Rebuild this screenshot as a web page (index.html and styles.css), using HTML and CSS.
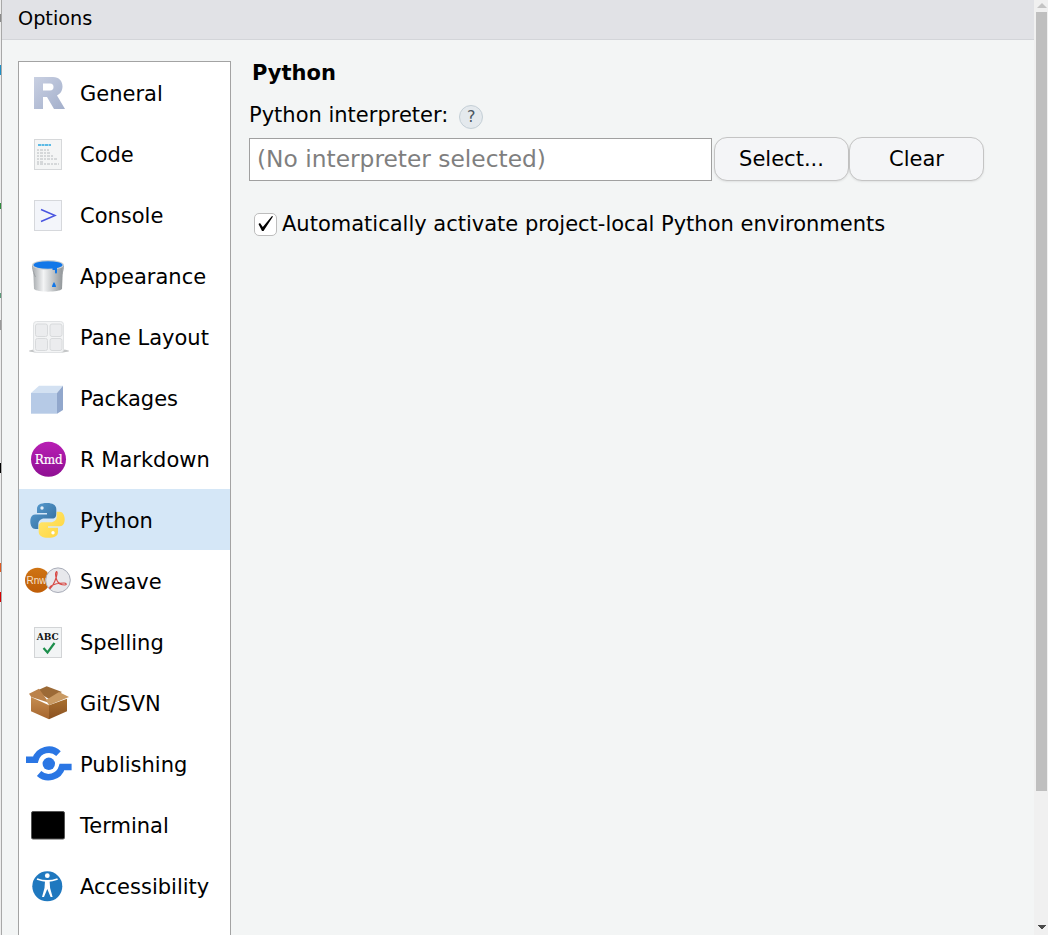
FILE: index.html
```html
<!DOCTYPE html>
<html lang="en">
<head>
<meta charset="utf-8">
<title>Options</title>
<link rel="stylesheet" href="styles.css">
</head>
<body>
<div class="backdrop">
  <i class="mark m0"></i><i class="mark m1"></i><i class="mark m2"></i><i class="mark m3"></i><i class="mark m7"></i><i class="mark m4"></i><i class="mark m5"></i><i class="mark m6"></i>
</div>
<div class="dialog">
  <header class="titlebar">Options</header>
  <div class="dialog-body">
    <nav class="sidebar">
      <div class="nav-item">
        <svg class="icon" width="50" height="40" viewBox="0 0 50 40"><defs><linearGradient id="rg" x1="0" y1="0" x2="1" y2="1"><stop offset="0" stop-color="#c9d0e2"/><stop offset="1" stop-color="#a3afcb"/></linearGradient></defs><path fill="url(#rg)" fill-rule="evenodd" d="M12 4h19c6 0 9.500 4 9.500 9.500 0 4.500-2.500 7.500-5.500 9l8 13.500H32l-7-12h-4v12h-9zM21 10.500v7h7c2.500 0 3.500-1.500 3.500-3.500s-1-3.500-3.500-3.500z"/></svg>
        <span class="nav-label">General</span>
      </div>
      <div class="nav-item">
        <svg class="icon" width="50" height="40" viewBox="0 0 50 40"><rect x="12.500" y="5.500" width="27" height="30" fill="#f4f5f5" stroke="#d6d8da"/><path stroke="#2aa7df" stroke-width="1.500" stroke-dasharray="3 .5" d="M16 11h13"/><path stroke="#a8acb0" stroke-width=".8" stroke-dasharray="2 1 3 1" d="M15 16h12M15 19h14M15 22h16M15 25h20M15 28h6M15 30h22"/></svg>
        <span class="nav-label">Code</span>
      </div>
      <div class="nav-item">
        <svg class="icon" width="50" height="40" viewBox="0 0 50 40"><rect x="12.500" y="5.500" width="27" height="30" fill="#f3f5fa" stroke="#d6d8dc"/><path fill="none" stroke="#4a55e0" stroke-width="1.500" d="M19 14.500l14 6-14 6"/></svg>
        <span class="nav-label">Console</span>
      </div>
      <div class="nav-item">
        <svg class="icon" width="50" height="40" viewBox="0 0 50 40"><defs><linearGradient id="bk" x1="0" x2="1"><stop offset="0" stop-color="#a9adb0"/><stop offset=".35" stop-color="#f3f4f5"/><stop offset="1" stop-color="#8f9497"/></linearGradient></defs><path fill="url(#bk)" d="M11 9h30l-1 24c-3 3.500-25 3.500-28 0z"/><path fill="none" stroke="#9a9ea2" d="M10.500 9c0 6 2 10 3 12M41.500 9c0 6-2 10-3 12"/><ellipse cx="26" cy="9" rx="16" ry="5" fill="#ced1d3"/><ellipse cx="26" cy="9" rx="14.500" ry="3.800" fill="#1277e8"/><path fill="#1277e8" d="M30.500 11h4.500v5c0 2-2 2-2 0v-2h-2.500zM32 26c1 2 2 3 2 5h-4c0-2 1-3 2-5z"/></svg>
        <span class="nav-label">Appearance</span>
      </div>
      <div class="nav-item">
        <svg class="icon" width="50" height="40" viewBox="0 0 50 40"><ellipse cx="27" cy="34" rx="20" ry="2" fill="#c4c6c7"/><rect x="11.500" y="4.500" width="30" height="31" rx="3" fill="#f3f4f5" stroke="#e0e2e4"/><g fill="#ebecee" stroke="#d8dadc"><rect x="13.500" y="7" width="12" height="12.500" rx="2"/><rect x="28" y="7" width="12" height="12.500" rx="2"/><rect x="13.500" y="21.500" width="12" height="12" rx="2"/><rect x="28" y="21.500" width="12" height="12" rx="2"/></g></svg>
        <span class="nav-label">Pane Layout</span>
      </div>
      <div class="nav-item">
        <svg class="icon" width="50" height="40" viewBox="0 0 50 40"><path fill="#b6cae6" d="M9 15h26v20.700H9z"/><path fill="#d3e1f2" d="M9 15l8-7.300h24L35 15z"/><path fill="#91a7cc" d="M35 15l6-7.300V32l-6 3.700z"/></svg>
        <span class="nav-label">Packages</span>
      </div>
      <div class="nav-item">
        <svg class="icon" width="50" height="40" viewBox="0 0 50 40"><defs><linearGradient id="rm" x1="0" y1="0" x2="0" y2="1"><stop offset="0" stop-color="#b81fb4"/><stop offset="1" stop-color="#8f1093"/></linearGradient></defs><circle cx="26.500" cy="20.300" r="17.500" fill="url(#rm)"/><text x="26.700" y="25" class="rmd">Rmd</text></svg>
        <span class="nav-label">R Markdown</span>
      </div>
      <div class="nav-item active">
        <svg class="icon" width="50" height="40" viewBox="0 0 50 40"><defs><linearGradient id="py1" x1="0" y1="0" x2="1" y2="1"><stop offset="0" stop-color="#5a9fd4"/><stop offset="1" stop-color="#306998"/></linearGradient><linearGradient id="py2" x1="0" y1="0" x2="1" y2="1"><stop offset="0" stop-color="#ffd43b"/><stop offset="1" stop-color="#ffe873"/></linearGradient></defs><path fill="url(#py1)" d="M25 3c-7 0-10 2-10 6v4h10v1.500H13c-3 0-4.700 3-4.700 7s2 7.500 5 7.500h3v-5c0-3 2.500-5.500 6-5.500h8c3 0 4-2 4-5V9c0-4-4-6-9-6z"/><path fill="url(#py2)" transform="rotate(180 25.500 20.400)" d="M25 3c-7 0-10 2-10 6v4h10v1.500H13c-3 0-4.700 3-4.700 7s2 7.500 5 7.500h3v-5c0-3 2.500-5.500 6-5.500h8c3 0 4-2 4-5V9c0-4-4-6-9-6z"/><circle cx="20" cy="8" r="1.700" fill="#e6f0f8"/><circle cx="31" cy="32.800" r="1.700" fill="#fff"/></svg>
        <span class="nav-label">Python</span>
      </div>
      <div class="nav-item">
        <svg class="icon" width="50" height="40" viewBox="0 0 50 40"><defs><linearGradient id="rn" x1="0" y1="0" x2="0" y2="1"><stop offset="0" stop-color="#cf7414"/><stop offset="1" stop-color="#bf5d07"/></linearGradient></defs><circle cx="15.500" cy="19.200" r="12.500" fill="url(#rn)"/><text x="4.500" y="23" class="rnw">Rnw</text><circle cx="36" cy="19.200" r="12.300" fill="#e7e8ec" stroke="#a8acb8"/><path fill="none" stroke="#d84b47" stroke-width="1.200" d="M34.500 11c-1.500 0-1 5 .5 8.500s5 4.500 8 4.500c2 0 1.500-2-1-2-4 0-10 1-13 3-2 1.500-1.500 3-.5 2 3-2.500 6-10 6.500-14 .3-2-.3-2.500-.5-2.500z"/></svg>
        <span class="nav-label">Sweave</span>
      </div>
      <div class="nav-item">
        <svg class="icon" width="50" height="40" viewBox="0 0 50 40"><rect x="12.500" y="5.500" width="27" height="30" fill="#f2f4f5" stroke="#d2d4d6"/><text x="25.700" y="18" class="abc">ABC</text><path fill="none" stroke="#1d8f4c" stroke-width="2.200" d="M21.500 26l4 4.500 7-9.500"/></svg>
        <span class="nav-label">Spelling</span>
      </div>
      <div class="nav-item">
        <svg class="icon" width="50" height="40" viewBox="0 0 50 40"><defs><linearGradient id="bx1" x1="0" y1="0" x2="0" y2="1"><stop offset="0" stop-color="#c68d50"/><stop offset="1" stop-color="#a5652e"/></linearGradient><linearGradient id="bx2" x1="0" y1="0" x2="0" y2="1"><stop offset="0" stop-color="#a9702f"/><stop offset="1" stop-color="#8a5122"/></linearGradient></defs><path fill="#9c6a36" d="M14 8L24.700 3.300 40 9 27 16z"/><path fill="url(#bx1)" d="M9 14l18 8.300v14l-18-8z"/><path fill="url(#bx2)" d="M27 22.300l18-6.600v12.600l-18 8z"/><path fill="#bb824a" d="M7 10.700l10-5 10 14-17.700-5.700z"/><path fill="#c99a63" d="M37 9l10 5-20 8.300-3-5.300z"/></svg>
        <span class="nav-label">Git/SVN</span>
      </div>
      <div class="nav-item">
        <svg class="icon" width="50" height="40" viewBox="0 0 50 40"><g fill="none" stroke="#2a76e4" stroke-width="6.500"><path d="M4 15.700h9.400A14 14 0 0 1 36.500 9.600"/><path d="M49.600 23h-9.600A14 14 0 0 1 17.100 29.500"/></g><circle cx="26.800" cy="19.800" r="6.200" fill="#2a76e4"/></svg>
        <span class="nav-label">Publishing</span>
      </div>
      <div class="nav-item">
        <svg class="icon" width="50" height="40" viewBox="0 0 50 40"><rect x="9.500" y="6.500" width="33" height="27.500" rx="1.500" fill="#000" stroke="#555"/></svg>
        <span class="nav-label">Terminal</span>
      </div>
      <div class="nav-item">
        <svg class="icon" width="50" height="40" viewBox="0 0 50 40"><circle cx="25.300" cy="20.300" r="15" fill="#1f78bf"/><circle cx="25.300" cy="9.700" r="2.400" fill="#fff"/><path fill="none" stroke="#fff" stroke-width="1.800" d="M15 13c4 1.500 7 2 10.300 2s6.300-.5 10.300-2"/><path fill="#fff" d="M23 15h4.600l.5 7 2.500 9h-2l-3.300-8-3.300 8h-2l2.500-9z"/></svg>
        <span class="nav-label">Accessibility</span>
      </div>
    </nav>
    <main class="pane">
      <h2 class="pane-title">Python</h2>
      <div class="interp-label">
        <span>Python interpreter:</span>
        <span class="help">?</span>
      </div>
      <div class="interp-row">
        <div class="interp-input">(No interpreter selected)</div>
        <button class="btn">Select...</button>
        <button class="btn">Clear</button>
      </div>
      <label class="check-row">
        <span class="checkbox">
          <svg width="21" height="21" viewBox="0 0 21 21"><path fill="#000" d="M3.500 10l1.500-1 2.800 4L17 2l1 .6L8.500 17H7z"/></svg>
        </span>
        <span>Automatically activate project-local Python environments</span>
      </label>
    </main>
  </div>
</div>
<div class="scrollbar">
  <svg class="arrow-up" width="10" height="5" viewBox="0 0 10 5"><path fill="#c4c4c4" d="M5 0l5 5H0z"/></svg>
  <div class="thumb"></div>
  <div class="track"></div>
  <svg class="arrow-down" width="8" height="4" viewBox="0 0 8 4"><path fill="#4a4a4a" d="M0 0h8v1H7v1H6v1H5v1H3V3H2V2H1V1H0z"/></svg>
</div>
</body>
</html>
```
FILE: styles.css
```css
* { box-sizing: border-box; }
html, body { margin: 0; height: 935px; overflow: hidden; }
body {
  display: flex;
  position: relative;
  background: #f3f5f5;
  font-family: "DejaVu Sans", sans-serif;
  color: #000;
}
.backdrop {
  position: absolute;
  left: 0; top: 0;
  width: 1px; height: 935px;
  background: #ededed;
}
.mark { position: absolute; left: 0; width: 1px; display: block; }
.m0 { top: 14px; height: 8px; background: #8a8a8a; }
.m1 { top: 65px; height: 10px; background: #1d8fc5; }
.m2 { top: 203px; height: 6px; background: #2e8b3d; }
.m3 { top: 293px; height: 5px; background: #5c9a7a; }
.m7 { top: 320px; height: 10px; background: #9a9a9a; }
.m4 { top: 463px; height: 10px; background: #000; }
.m5 { top: 563px; height: 9px; background: #e05a20; }
.m6 { top: 592px; height: 10px; background: #d80000; }
.dialog {
  margin-left: 1px;
  width: 1033px;
  height: 935px;
  display: flex;
  flex-direction: column;
  border-left: 1px solid #a8a8a8;
}
.titlebar {
  height: 40px;
  flex: none;
  background: #e1e2e6;
  border-bottom: 1px solid #d3d5d9;
  padding: 8px 0 0 16px;
  font-size: 19.250px;
  line-height: 22px;
}
.dialog-body { flex: 1; display: flex; min-height: 0; padding: 21px 0 0 16px; }
.sidebar {
  width: 213px;
  flex: none;
  background: #fff;
  border: 1px solid #a3a3a3;
  border-bottom: 0;
  height: 900px;
}
.nav-item {
  height: 61px;
  display: flex;
  align-items: center;
  font-size: 21px;
  padding: 1px 0 0 3px;
}
.nav-label { padding-top: 2px; }
.nav-item.active { background: #d5e7f7; }
.icon { flex: none; margin-right: 8px; display: block; }
.rmd { font: 12px "DejaVu Serif", serif; fill: #fff; stroke: #fff; stroke-width: .2px; text-anchor: middle; }
.rnw { font: 10px "Liberation Sans", sans-serif; fill: #f6e1cc; }
.abc { font: bold 9px "DejaVu Serif", serif; fill: #111; text-anchor: middle; }
.pane { flex: 1; padding: 0 0 0 18px; font-size: 21px; }
.pane-title {
  margin: 0 0 0 3px;
  font-size: 21px;
  line-height: 24px;
  font-weight: bold;
}
.interp-label {
  display: flex;
  align-items: center;
  margin-top: 15px;
  height: 30px;
}
.help {
  margin-left: 11px;
  margin-top: 4px;
  width: 24px;
  height: 24px;
  border-radius: 50%;
  background: #e4e9ed;
  border: 1px solid #c4cfd6;
  color: #4a5660;
  font-size: 16px;
  line-height: 22px;
  text-align: center;
}
.interp-row { display: flex; align-items: center; margin-top: 7px; height: 44px; }
.interp-input {
  width: 463px;
  height: 43px;
  margin-top: 1px;
  background: #fff;
  border: 1px solid #a0a0a0;
  color: #7f7f7f;
  font-size: 23.330px;
  line-height: 40px;
  padding-left: 7px;
}
.btn {
  width: 135px;
  height: 44px;
  margin-left: 2px;
  background: #f4f5f7;
  border: 1px solid #c4c4c4;
  border-radius: 13px;
  font: 21px "DejaVu Sans", sans-serif;
  color: #000;
  padding: 0;
  box-shadow: 0 1px 2px rgba(0,0,0,.08);
}
.btn + .btn { margin-left: 0; }
.check-row { display: flex; align-items: center; margin: 28px 0 0 5px; height: 30px; }
.checkbox {
  width: 23px;
  height: 23px;
  flex: none;
  border: 1px solid #bdbdbd;
  border-radius: 5px;
  background: #fff;
  display: flex;
  align-items: center;
  justify-content: center;
  margin-right: 5px;
}
.scrollbar {
  position: absolute;
  right: 0; top: 0;
  width: 14px;
  height: 935px;
  background: #f0f0f0;
  display: flex;
  flex-direction: column;
  align-items: flex-start;
}
.arrow-up { flex: none; margin: 3px 0 4px 3px; display: block; }
.thumb { width: 11px; height: 779px; margin-left: 2px; background: #bfbfbf; flex: none; }
.track { flex: 1; }
.arrow-down { flex: none; margin: 0 0 6px 4px; display: block; }
```
